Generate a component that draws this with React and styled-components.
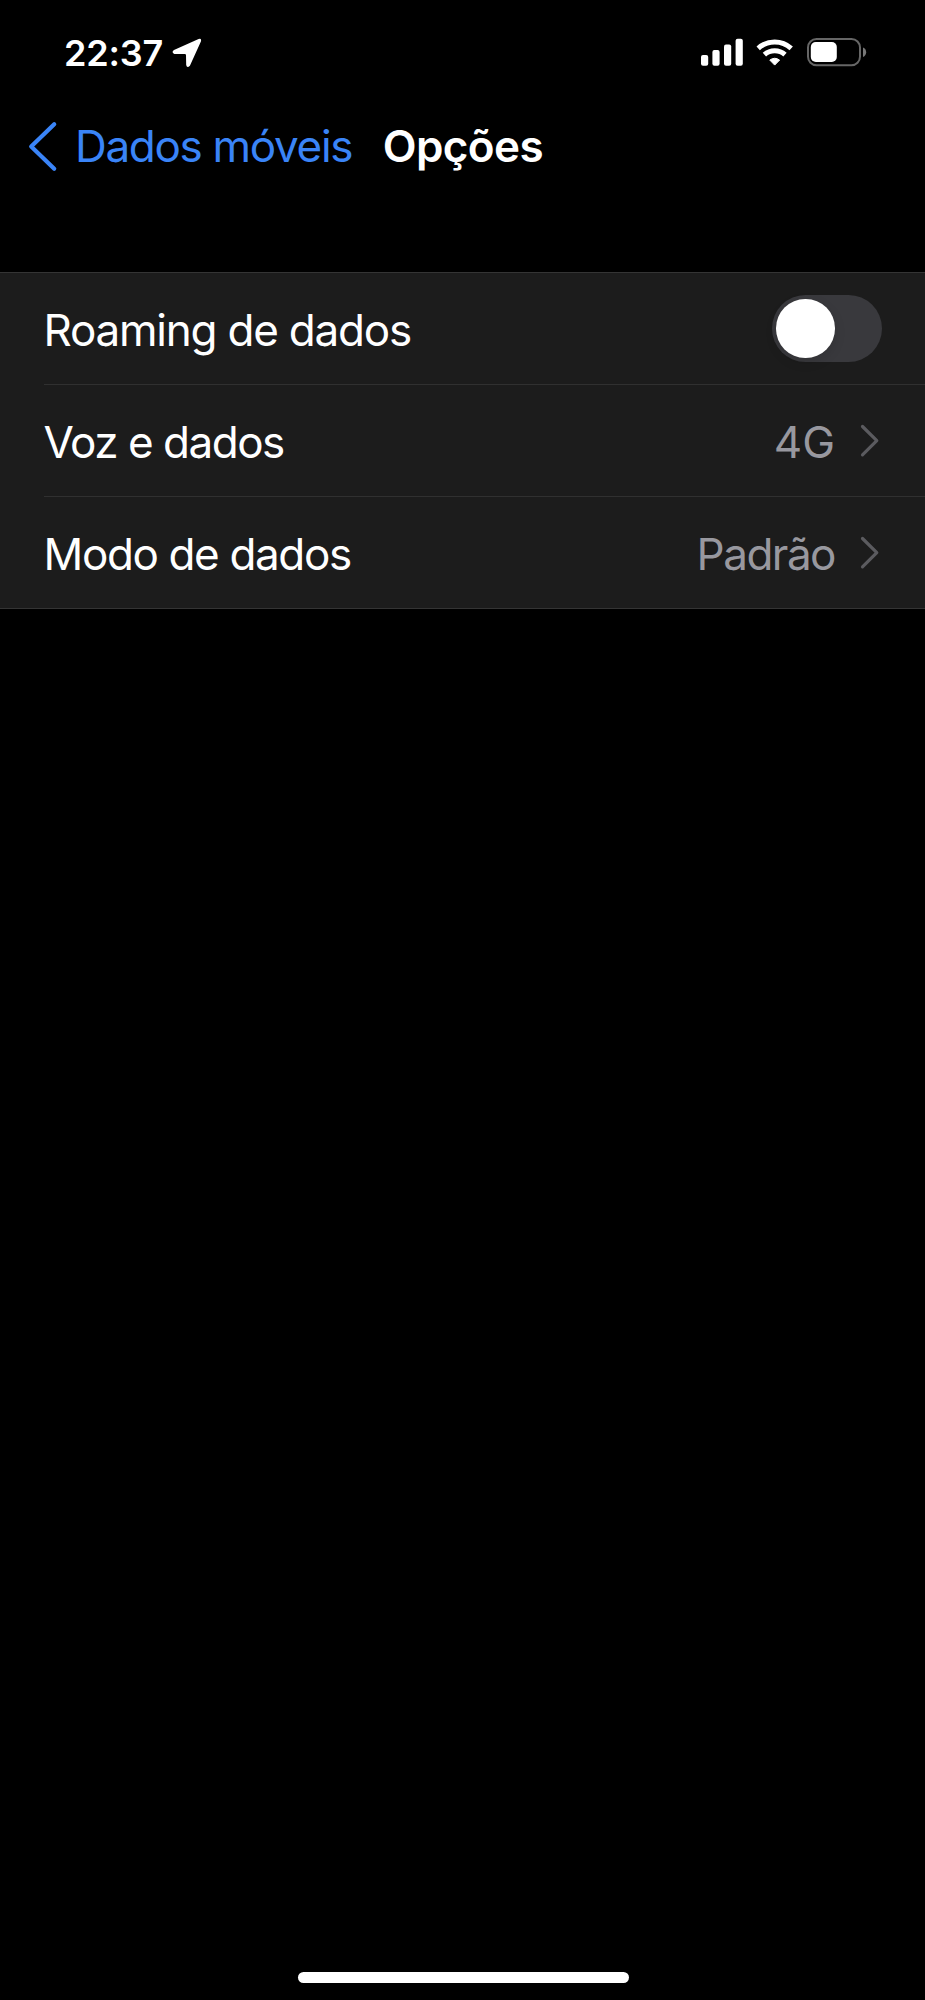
import React from 'react';
import styled, { createGlobalStyle } from 'styled-components';

const GlobalStyle = createGlobalStyle`
  body {
    margin: 0;
    background: #000;
  }
`;

const Screen = styled.div`
  display: flex;
  flex-direction: column;
  width: 925px;
  height: 2000px;
  box-sizing: border-box;
  background: #000;
  color: #fff;
  font-family: Inter, 'Liberation Sans', sans-serif;
  overflow: hidden;
`;

const StatusBar = styled.div`
  display: flex;
  align-items: center;
  justify-content: space-between;
  height: 78px;
  padding: 14px 58px 0 64px;
`;

const StatusGroup = styled.div`
  display: flex;
  align-items: center;
  gap: ${({ $gap }) => $gap}px;
`;

const Clock = styled.span`
  width: 98px;
  font-size: 36px;
  font-weight: 560;
  line-height: 44px;
  letter-spacing: -0.2px;
`;

const Icon = styled.svg`
  display: block;
  flex: none;
`;

const NavBar = styled.header`
  display: flex;
  align-items: center;
  height: 108px;
  padding-left: 27px;
`;

const BackButton = styled.button`
  display: flex;
  align-items: center;
  gap: 17px;
  padding: 0;
  border: none;
  background: none;
  color: #3a84f7;
  font: 400 44px/54px Inter, 'Liberation Sans', sans-serif;
  letter-spacing: -1.3px;
  white-space: nowrap;
`;

const Title = styled.h1`
  margin: 0 0 0 30.5px;
  font-size: 44px;
  font-weight: 570;
  line-height: 54px;
  letter-spacing: -0.6px;
`;

const Group = styled.ul`
  margin: 72px 0 0;
  padding: 0;
  list-style: none;
  background: #1c1c1c;
  border-top: 1px solid #343434;
  border-bottom: 1px solid #343434;
`;

const Row = styled.li`
  display: flex;
  align-items: center;
  height: 111px;
  margin-left: 43.5px;
  padding-right: 43px;

  & + & {
    border-top: 1px solid #303030;
  }
`;

const Label = styled.span`
  flex: 1;
  padding-top: 3px;
  font-size: 44px;
  line-height: 54px;
  letter-spacing: ${({ $tracking }) => $tracking}px;
`;

const Value = styled.span`
  padding-top: 3px;
  margin-right: 24px;
  color: #98989f;
  font-size: 44px;
  line-height: 54px;
  letter-spacing: ${({ $tracking }) => $tracking}px;
`;

const Switch = styled.button`
  display: flex;
  align-items: center;
  width: 110px;
  height: 67px;
  padding: 0 4px;
  border: none;
  border-radius: 34px;
  background: #39393d;
`;

const Knob = styled.span`
  width: 58.5px;
  height: 58.5px;
  border-radius: 50%;
  background: #fff;
  box-shadow: 0 4px 12px rgba(0, 0, 0, 0.12);
`;

const HomeIndicator = styled.div`
  width: 331px;
  height: 11px;
  margin: auto auto 17px 297.5px;
  border-radius: 6px;
  background: #fff;
`;

const LocationIcon = () => (
  <Icon width="30" height="32" viewBox="172 37 30 32" fill="#fff">
    <path d="M198.6 39.1 L174 50.1 Q171 52 174.3 54 L184.8 54.1 Q186 54.1 186 55.3 L186.2 65 Q187 68.6 189.9 65.7 L200.9 41.6 Q201.8 38 198.6 39.1 Z" />
  </Icon>
);

const SignalIcon = () => (
  <Icon width="44" height="32" viewBox="700 37 44 32" fill="#fff">
    <rect x="701" y="55" width="7.2" height="10.8" rx="2" />
    <rect x="712.4" y="50" width="7.2" height="15.8" rx="2" />
    <rect x="724" y="44.5" width="7.2" height="21.3" rx="2" />
    <rect x="735.6" y="38.7" width="7.2" height="27.1" rx="2" />
  </Icon>
);

const WifiIcon = () => (
  <Icon width="38" height="32" viewBox="756 37 38 32">
    <g fill="none" stroke="#fff" strokeWidth="5">
      <path d="M758.2 48.3 A24.5 24.5 0 0 1 791.2 48.3" />
      <path d="M764.4 54.7 A15.5 15.5 0 0 1 785 54.7" />
    </g>
    <path
      d="M769.8 60.1 A8.2 8.2 0 0 1 779.6 60.1 L774.7 65.1 Z"
      fill="#fff"
      stroke="#fff"
      strokeWidth="1"
      strokeLinejoin="round"
    />
  </Icon>
);

const BatteryIcon = () => (
  <Icon width="61" height="32" viewBox="806 37 61 32">
    <rect x="808" y="39" width="52" height="26.2" rx="8.5" fill="none" stroke="#666" strokeWidth="2" />
    <rect x="810.8" y="42" width="26" height="20" rx="5" fill="#fff" />
    <path d="M863 47.6 C867.2 49 867.2 55.6 863 57 Z" fill="#777" />
  </Icon>
);

const BackIcon = () => (
  <Icon width="31" height="54" viewBox="27 119 31 54">
    <path
      d="M54.2 124.2 L31.2 146.5 L54.2 168.8"
      fill="none"
      stroke="currentColor"
      strokeWidth="4.2"
      strokeLinecap="round"
      strokeLinejoin="round"
    />
  </Icon>
);

const DisclosureIcon = () => (
  <Icon width="23" height="36" viewBox="859 422.5 23 36">
    <path
      d="M862.5 426 L876.8 440.2 L862.5 454.4"
      fill="none"
      stroke="#5b5b5f"
      strokeWidth="3.2"
      strokeLinecap="round"
      strokeLinejoin="round"
    />
  </Icon>
);

const options = [
  { label: 'Voz e dados', tracking: -1.5, value: '4G', valueTracking: 0 },
  { label: 'Modo de dados', tracking: -1.36, value: 'Padrão', valueTracking: -1.5 },
];

const App = () => (
  <>
    <GlobalStyle />
    <Screen>
      <StatusBar>
        <StatusGroup $gap={10}>
          <Clock>22:37</Clock>
          <LocationIcon />
        </StatusGroup>
        <StatusGroup $gap={12}>
          <SignalIcon />
          <WifiIcon />
          <BatteryIcon />
        </StatusGroup>
      </StatusBar>
      <NavBar>
        <BackButton type="button">
          <BackIcon />
          Dados móveis
        </BackButton>
        <Title>Opções</Title>
      </NavBar>
      <Group>
        <Row>
          <Label $tracking={-1.22}>Roaming de dados</Label>
          <Switch type="button" role="switch" aria-checked="false" aria-label="Roaming de dados">
            <Knob />
          </Switch>
        </Row>
        {options.map((option) => (
          <Row key={option.label}>
            <Label $tracking={option.tracking}>{option.label}</Label>
            <Value $tracking={option.valueTracking}>{option.value}</Value>
            <DisclosureIcon />
          </Row>
        ))}
      </Group>
      <HomeIndicator />
    </Screen>
  </>
);

export default App;
